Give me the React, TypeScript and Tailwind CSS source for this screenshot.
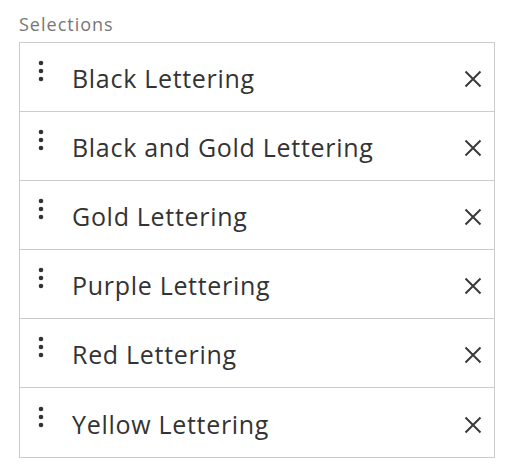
const ITEMS = [
  "Black Lettering",
  "Black and Gold Lettering",
  "Gold Lettering",
  "Purple Lettering",
  "Red Lettering",
  "Yellow Lettering",
];

function DragDots() {
  return (
    <svg width="6" height="22" viewBox="0 0 6 22" className="shrink-0 text-[#333]">
      <circle cx="3" cy="3" r="2.3" fill="currentColor" />
      <circle cx="3" cy="11" r="2.3" fill="currentColor" />
      <circle cx="3" cy="19" r="2.3" fill="currentColor" />
    </svg>
  );
}

function CloseIcon() {
  return (
    <svg width="18" height="18" viewBox="0 0 18 18" className="shrink-0 text-[#3a3a3a]">
      <path d="M1.5 1.5L16.5 16.5M16.5 1.5L1.5 16.5" stroke="currentColor" strokeWidth="2" />
    </svg>
  );
}

export default function App() {
  return (
    <div className="w-[512px] h-[476px] bg-white pl-[19px] pr-[17px] pt-[12px] font-['Open_Sans',sans-serif]">
      <p className="text-[18px] leading-[24px] tracking-[1px] text-[#777] mb-[6px]">Selections</p>
      <ul className="border border-[#cccccc]">
        {ITEMS.map((item, i) => (
          <li
            key={item}
            className={`flex items-center h-[69px] pl-[18px] pr-[12px] ${i < ITEMS.length - 1 ? "border-b border-[#cccccc]" : ""}`}
          >
            <span className="mb-[12px]">
              <DragDots />
            </span>
            <span className="ml-[28px] flex-1 text-[25px] tracking-[0.7px] text-[#333] mt-[4px]">{item}</span>
            <span className="mt-[4px]">
              <CloseIcon />
            </span>
          </li>
        ))}
      </ul>
    </div>
  );
}
